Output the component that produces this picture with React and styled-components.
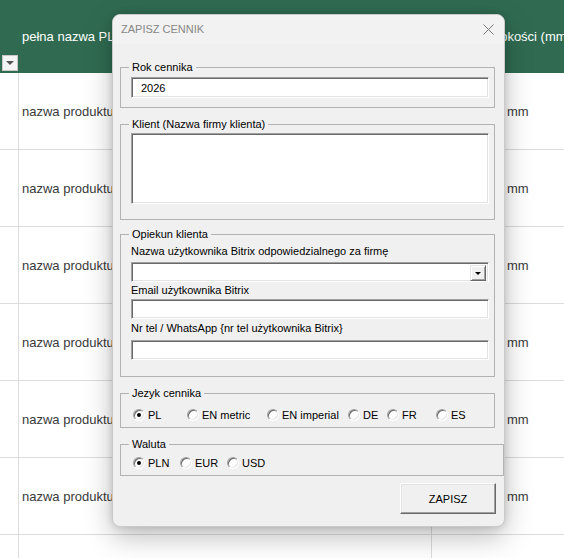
import React from 'react'
import styled, { createGlobalStyle } from 'styled-components'

const GlobalStyle = createGlobalStyle`
  html, body {
    margin: 0;
    padding: 0;
    background: #fff;
    overflow: hidden;
  }
  #root {
    position: relative;
    width: 564px;
    height: 558px;
    overflow: hidden;
  }
  * {
    box-sizing: border-box;
  }
`

// ---- spreadsheet behind the dialog ----

const Sheet = styled.div`
  display: grid;
  grid-template-columns: 19px 413px 132px;
  grid-template-rows: 73px;
  grid-auto-rows: 77px;
  font-family: "Liberation Sans", Arial, sans-serif;
  font-size: 13px;
  color: #3a3a3a;
`

const HeaderCell = styled.div`
  background: #306b51;
  color: #fff;
  display: flex;
  align-items: ${props => props.$bottom ? 'flex-end' : 'center'};
  padding: ${props => props.$pad};
  white-space: nowrap;
  overflow: hidden;
`

const FilterButton = styled.div`
  width: 16px;
  height: 16px;
  background: #f4f4f4;
  border: 1px solid #c8c8c8;
  display: flex;
  align-items: center;
  justify-content: center;
  &::after {
    content: '';
    border-left: 4px solid transparent;
    border-right: 4px solid transparent;
    border-top: 4px solid #555;
  }
`

const Cell = styled.div`
  display: flex;
  align-items: center;
  padding-left: ${props => props.$pad || 0}px;
  border-bottom: 1px solid #dcdcdc;
  border-right: ${props => props.$last ? 'none' : '1px solid #dcdcdc'};
  white-space: nowrap;
  overflow: hidden;
`

// ---- dialog ----

const Dialog = styled.div`
  position: absolute;
  left: 112px;
  top: 14px;
  width: 393px;
  height: 513px;
  background: #f0f0f0;
  border: 1px solid #cacaca;
  border-radius: 8px;
  box-shadow: 0 10px 28px rgba(0, 0, 0, 0.26), 0 0 7px rgba(0, 0, 0, 0.14);
  font-family: "Liberation Sans", Arial, sans-serif;
  font-size: 11px;
  color: #000;
  display: flex;
  flex-direction: column;
`

const TitleBar = styled.div`
  height: 29px;
  display: flex;
  align-items: center;
  justify-content: space-between;
  padding: 0 10px 1px 8px;
  background: #f2f2f2;
  border-radius: 7px 7px 0 0;
  color: #878787;
  font-size: 11px;
`

const Body = styled.div`
  padding: 17px 0 0 7px;
`

const Group = styled.fieldset`
  width: ${props => props.$w}px;
  margin: 0 0 ${props => props.$mb}px;
  padding: ${props => props.$pad};
  border: 1px solid #b2b2b2;
  min-width: 0;
`

const Legend = styled.legend`
  margin-left: ${props => props.$ml ?? -2}px;
  padding: 0 3px;
  line-height: 13px;
  font-size: 11px;
`

const FieldLabel = styled.div`
  line-height: 13px;
  margin: ${props => props.$m};
`

const sunken = `
  border: 1px solid;
  border-color: #a0a0a0 #ffffff #ffffff #a0a0a0;
  box-shadow: inset 1px 1px 0 #696969, inset -1px -1px 0 #e3e3e3;
  background: #fff;
`

const TextBox = styled.input`
  ${sunken}
  display: block;
  width: 100%;
  height: ${props => props.$h || 20}px;
  padding: 0 0 0 9px;
  font-family: inherit;
  font-size: 11px;
  color: #000;
  outline: none;
`

const TextArea = styled.textarea`
  ${sunken}
  display: block;
  width: 100%;
  height: 71px;
  resize: none;
  font-family: inherit;
  font-size: 11px;
  outline: none;
`

const Combo = styled.div`
  ${sunken}
  height: 20px;
  display: flex;
  justify-content: flex-end;
  padding: 2px;
`

const DropButton = styled.div`
  width: 16px;
  height: 16px;
  background: #f0f0f0;
  border: 1px solid;
  border-color: #e3e3e3 #696969 #696969 #e3e3e3;
  box-shadow: inset 1px 1px 0 #fff, inset -1px -1px 0 #a0a0a0;
  display: flex;
  align-items: center;
  justify-content: center;
  &::after {
    content: '';
    border-left: 3px solid transparent;
    border-right: 3px solid transparent;
    border-top: 3px solid #000;
  }
`

const RadioRow = styled.div`
  display: flex;
  align-items: center;
  height: 16px;
  padding-left: ${props => props.$indent}px;
`

const RadioOption = styled.label`
  display: flex;
  align-items: center;
  gap: 3px;
  width: ${props => props.$w ? `${props.$w}px` : 'auto'};
`

const RadioCircle = styled.span`
  width: 12px;
  height: 12px;
  border-radius: 50%;
  border: 1px solid;
  border-color: #a0a0a0 #fff #fff #a0a0a0;
  box-shadow: inset 1px 1px 0 #696969, inset -1px -1px 0 #e3e3e3;
  background: #fff;
  display: flex;
  align-items: center;
  justify-content: center;
  &::after {
    content: '';
    width: 4px;
    height: 4px;
    border-radius: 50%;
    background: ${props => props.$on ? '#000' : 'transparent'};
  }
`

const ButtonRow = styled.div`
  display: flex;
  justify-content: flex-end;
  padding: 0 8px 0 0;
`

const SaveButton = styled.button`
  width: 96px;
  height: 31px;
  background: #f0f0f0;
  border: 1px solid;
  border-color: #fff #696969 #696969 #fff;
  box-shadow: inset -1px -1px 0 #a0a0a0, inset 1px 1px 0 #e3e3e3;
  font-family: inherit;
  font-size: 11px;
  color: #000;
  padding: 0;
`

const Radio = ({ label, on, w }) => (
  <RadioOption $w={w}>
    <RadioCircle $on={on} />
    {label}
  </RadioOption>
)

const languages = [
  { label: 'PL', w: 54, on: true },
  { label: 'EN metric', w: 80 },
  { label: 'EN imperial', w: 81 },
  { label: 'DE', w: 39 },
  { label: 'FR', w: 49 },
  { label: 'ES' },
]

const currencies = [
  { label: 'PLN', w: 47, on: true },
  { label: 'EUR', w: 47 },
  { label: 'USD' },
]

const App = () => {
  const rows = [0, 1, 2, 3, 4, 5, 6]
  return (
    <>
      <GlobalStyle />
      <Sheet>
        <HeaderCell $bottom $pad="0 0 2px 2px">
          <FilterButton />
        </HeaderCell>
        <HeaderCell $pad="0 0 0 3px">pełna nazwa PL</HeaderCell>
        <HeaderCell $pad="0 0 0 43px">Wysokości (mm)</HeaderCell>
        {rows.map((r) => (
          <React.Fragment key={r}>
            <Cell />
            <Cell $pad={3}>{r < 6 ? 'nazwa produktu' : ''}</Cell>
            <Cell $pad={75} $last>{r < 6 ? 'mm' : ''}</Cell>
          </React.Fragment>
        ))}
      </Sheet>

      <Dialog>
        <TitleBar>
          <span>ZAPISZ CENNIK</span>
          <svg width="11" height="11" viewBox="0 0 11 11">
            <path d="M0.5 0.5 L10.5 10.5 M10.5 0.5 L0.5 10.5" stroke="#7a7a7a" strokeWidth="1" />
          </svg>
        </TitleBar>
        <Body>
          <Group $w={375} $mb={10} $pad="3px 5px 9px 10px">
            <Legend>Rok cennika</Legend>
            <TextBox $h={21} defaultValue="2026" />
          </Group>

          <Group $w={375} $mb={8} $pad="2px 5px 15px 10px">
            <Legend>Klient (Nazwa firmy klienta)</Legend>
            <TextArea />
          </Group>

          <Group $w={375} $mb={10} $pad="4px 5px 16px 10px">
            <Legend>Opiekun klienta</Legend>
            <FieldLabel $m="0 0 4px">Nazwa użytkownika Bitrix odpowiedzialnego za firmę</FieldLabel>
            <Combo>
              <DropButton />
            </Combo>
            <FieldLabel $m="2px 0 2px">Email użytkownika Bitrix</FieldLabel>
            <TextBox />
            <FieldLabel $m="3px 0 5px">Nr tel / WhatsApp {'{'}nr tel użytkownika Bitrix{'}'}</FieldLabel>
            <TextBox />
          </Group>

          <Group $w={375} $mb={10} $pad="7px 5px 4px 0">
            <Legend $ml={8}>Jezyk cennika</Legend>
            <RadioRow $indent={12}>
              {languages.map((l) => (
                <Radio key={l.label} {...l} />
              ))}
            </RadioRow>
          </Group>

          <Group $w={384} $mb={7} $pad="4px 5px 4px 10px">
            <Legend>Waluta</Legend>
            <RadioRow $indent={2}>
              {currencies.map((c) => (
                <Radio key={c.label} {...c} />
              ))}
            </RadioRow>
          </Group>

          <ButtonRow>
            <SaveButton>ZAPISZ</SaveButton>
          </ButtonRow>
        </Body>
      </Dialog>
    </>
  )
}

export default App
